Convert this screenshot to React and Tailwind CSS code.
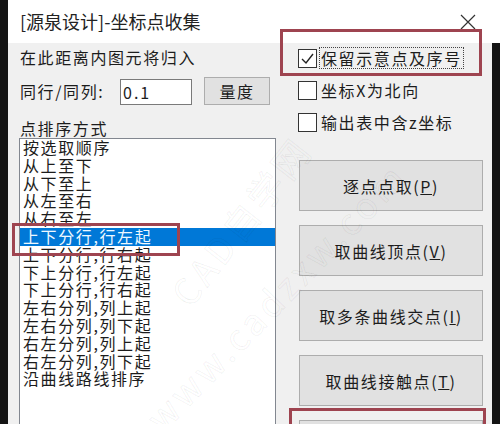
import React from 'react';

const orders = [
    '按选取顺序',
    '从上至下',
    '从下至上',
    '从左至右',
    '从右至左',
    '上下分行,行左起',
    '上下分行,行右起',
    '下上分行,行左起',
    '下上分行,行右起',
    '左右分列,列上起',
    '左右分列,列下起',
    '右左分列,列上起',
    '右左分列,列下起',
    '沿曲线路线排序',
];

const picks = [
    { label: '逐点点取', key: 'P' },
    { label: '取曲线顶点', key: 'V' },
    { label: '取多条曲线交点', key: 'I' },
    { label: '取曲线接触点', key: 'T' },
    { label: '', key: '' },
];

function CheckRow({ checked, focused, children }) {
    return (
        <div className="flex items-center h-[22px]">
            <div className="w-[19px] h-[19px] bg-white border border-[#333] flex items-center justify-center">
                {checked ? (
                    <svg width="17" height="17" viewBox="0 0 17 17">
                        <polyline points="3,9 7,13 14,4" fill="none" stroke="#222" strokeWidth="1.4" />
                    </svg>
                ) : null}
            </div>
            <span className={'ml-[3px] px-[1px] leading-[20px] ' + (focused ? 'outline outline-1 outline-dotted outline-[#444]' : '')}>
                {children}
            </span>
        </div>
    );
}

export default function App() {
    return (
        <div className="relative w-[500px] h-[424px] overflow-hidden bg-[#141414] text-[#1c1c1c] text-[16px] tracking-[1.6px] font-['Noto_Sans_CJK_SC','Liberation_Sans',sans-serif]">
            {/* title bar */}
            <div className="ml-[8px] h-[43px] bg-white flex items-center justify-between pl-[12px] pr-[24px]">
                <span className="text-[18px] tracking-normal text-[#222]">[源泉设计]-坐标点收集</span>
                <svg width="16" height="16" viewBox="0 0 16 16">
                    <path d="M1 1L15 15M15 1L1 15" stroke="#333" strokeWidth="1.2" />
                </svg>
            </div>

            <div className="flex h-[381px]">
                <div className="w-[8px]" />
                <div className="w-[484px] bg-[#f0f0f0] flex">
                    {/* left side */}
                    <div className="w-[268px] pl-[11px] flex flex-col">
                        <div className="mt-[4px] ml-[1px] leading-[20px]">在此距离内图元将归入</div>
                        <div className="mt-[10px] ml-[1px] h-[30px] flex items-center">
                            <span className="w-[100px] leading-[20px]">同行/同列:</span>
                            <div className="self-end w-[72px] h-[26px] bg-white border border-[#7a7a7a] pl-[2px] leading-[24px] tracking-[2px]">0.1</div>
                            <div className="self-start ml-[12px] w-[66px] h-[28px] bg-[#e1e1e1] border border-[#adadad] flex items-center justify-center">量度</div>
                        </div>
                        <div className="mt-[14px] ml-[1px] leading-[19px]">点排序方式</div>
                        <div className="w-[257px] h-[290px] shrink-0 bg-white border border-[#828790]">
                            {orders.map((o, i) => (
                                <div key={i} className={'h-[17.8px] leading-[17.8px] pl-[3px] whitespace-nowrap ' + (i === 5 ? 'bg-[#0078d7] text-[#eef8ff]' : '')}>
                                    {o}
                                </div>
                            ))}
                        </div>
                    </div>

                    {/* right side */}
                    <div className="w-[216px] pl-[22px] flex flex-col">
                        <div className="mt-[4px] flex flex-col gap-[10px]">
                            <CheckRow checked focused>保留示意点及序号</CheckRow>
                            <CheckRow>坐标X为北向</CheckRow>
                            <CheckRow>输出表中含z坐标</CheckRow>
                        </div>
                        <div className="mt-[27px] flex flex-col gap-[14px]">
                            {picks.map((p, i) => (
                                <div key={i} className="ml-[1px] w-[184px] h-[51px] shrink-0 bg-[#e1e1e1] border border-[#adadad] flex items-center justify-center">
                                    {p.label ? (
                                        <span>{p.label}(<span className="underline">{p.key}</span>)</span>
                                    ) : null}
                                </div>
                            ))}
                        </div>
                    </div>
                </div>
                <div className="w-[8px]" />
            </div>

            {/* watermark */}
            <span className="pointer-events-none absolute left-[240px] top-[220px] -translate-x-1/2 -translate-y-1/2 rotate-[-52deg] whitespace-nowrap text-[36px] tracking-[4px] text-transparent [-webkit-text-stroke:1px_rgba(0,0,0,0.06)]">CAD自学网</span>
            <span className="pointer-events-none absolute left-[275px] top-[295px] -translate-x-1/2 -translate-y-1/2 rotate-[-46deg] whitespace-nowrap text-[36px] tracking-[4px] text-transparent [-webkit-text-stroke:1px_rgba(0,0,0,0.06)]">www.cadzxw.com</span>

            {/* red annotation boxes */}
            <div className="absolute left-[12px] top-[223px] w-[168px] h-[33px] border-[3px] border-[#9e4450]" />
            <div className="absolute left-[280px] top-[29px] w-[202px] h-[47px] border-[3px] border-[#9e4450]" />
            <div className="absolute left-[289px] top-[408px] w-[197px] h-[40px] border-[3px] border-[#9e4450]" />
        </div>
    );
}
